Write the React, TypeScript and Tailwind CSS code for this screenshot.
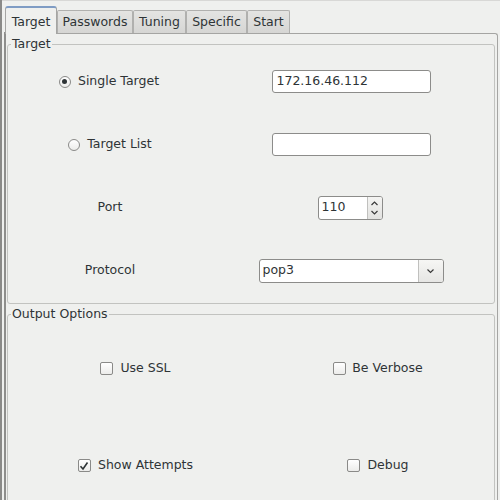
import React from "react";

const font = { fontFamily: '"DejaVu Sans", "Liberation Sans", sans-serif' };

function Radio({ checked }: { checked?: boolean }) {
  return (
    <span className="w-[12px] h-[12px] rounded-full border border-[#8a8a88] bg-gradient-to-b from-[#ffffff] to-[#ececea] flex items-center justify-center shrink-0">
      {checked && <span className="w-[5px] h-[5px] rounded-full bg-[#2e3436]" />}
    </span>
  );
}

function Check({ checked }: { checked?: boolean }) {
  return (
    <span className="w-[13px] h-[13px] rounded-[2px] border border-[#8a8a88] bg-gradient-to-b from-[#ffffff] to-[#ececea] flex items-center justify-center shrink-0">
      {checked && (
        <svg width="10" height="10" viewBox="0 0 10 10">
          <path d="M1.5 5.2 L4 8 L8.5 1.5" fill="none" stroke="#2e3436" strokeWidth="1.6" />
        </svg>
      )}
    </span>
  );
}

function Tab({ label, active, w }: { label: string; active?: boolean; w: string }) {
  if (active) {
    return (
      <div className={`${w} h-[28px] -mb-[1px] relative z-10 bg-[#eff0ee] border border-b-0 border-[#a5a5a3] border-t-[#7f9cc4] border-t-2 rounded-t-[3px] flex items-start justify-center pt-[5px]`}>
        <span className="text-[12.5px] text-[#2e3436]">{label}</span>
      </div>
    );
  }
  return (
    <div className={`${w} h-[23px] bg-gradient-to-b from-[#e4e4e2] to-[#d6d6d4] border border-b-0 border-[#b0b0ae] rounded-t-[2px] flex items-center justify-center`}>
      <span className="text-[12.5px] text-[#2e3436]">{label}</span>
    </div>
  );
}

function Group({ title, children, className }: { title: string; children: React.ReactNode; className?: string }) {
  return (
    <div className={`relative border border-[#c2c3c0] rounded-[3px] ${className ?? ""}`}>
      <span className="absolute -top-[9px] left-[3px] bg-[#eff0ee] px-[1px] text-[12.5px] leading-[16px] text-[#2e3436]">
        {title}
      </span>
      {children}
    </div>
  );
}

export default function App() {
  return (
    <div className="w-[500px] h-[500px] bg-[#eff0ee] overflow-hidden relative text-[#2e3436]" style={font}>
      <div className="h-[1px] bg-[#d8d8d6]" />
      <div className="absolute left-0 top-0 bottom-0 w-[2px] bg-[#8a8a88]" />
      <div className="absolute left-[4px] top-[32px] bottom-0 w-[2px] bg-[#8e8e8c]" />
      <div className="pl-[5px] pt-[4px] flex items-end h-[32px]">
        <Tab label="Target" active w="w-[52px]" />
        <Tab label="Passwords" w="w-[76px]" />
        <Tab label="Tuning" w="w-[53px]" />
        <Tab label="Specific" w="w-[61px]" />
        <Tab label="Start" w="w-[43px]" />
      </div>
      <div className="ml-[4px] w-[494px] h-[470px] border-t border-r border-[#a5a5a3] rounded-tr-[3px] pl-[3px] pr-[2px] pt-[10px]">
        <Group title="Target" className="h-[260px]">
          <div className="grid grid-cols-[200px_1fr] grid-rows-[63px_63px_63px_63px] pt-[5px] pl-[2px]">
            <div className="flex items-center justify-center">
              <div className="flex items-center gap-[7px] -ml-[2px]">
                <Radio checked />
                <span className="text-[12.5px]">Single Target</span>
              </div>
            </div>
            <div className="flex items-center justify-center">
              <div className="w-[159px] h-[23px] -ml-[2px] border border-[#8c8c8a] rounded-[3px] bg-white flex items-center px-[4px] text-[12.5px]">
                172.16.46.112
              </div>
            </div>
            <div className="flex items-center justify-center">
              <div className="flex items-center gap-[7px]">
                <Radio />
                <span className="text-[12.5px]">Target List</span>
              </div>
            </div>
            <div className="flex items-center justify-center">
              <div className="w-[159px] h-[23px] -ml-[2px] border border-[#8c8c8a] rounded-[3px] bg-white" />
            </div>
            <div className="flex items-center justify-center">
              <span className="text-[12.5px]">Port</span>
            </div>
            <div className="flex items-center justify-center">
              <div className="w-[65px] h-[24px] -ml-[4px] border border-[#8c8c8a] rounded-[3px] bg-white flex">
                <div className="flex-1 flex items-center px-[3px] text-[12.5px]">110</div>
                <div className="w-[15px] border-l border-[#c0c0be] bg-gradient-to-b from-[#f4f4f2] to-[#e2e2e0] flex flex-col items-center justify-center rounded-r-[2px]">
                  <svg width="9" height="20" viewBox="0 0 9 20">
                    <path d="M1.5 7 L4.5 4 L7.5 7" fill="none" stroke="#3a3a3a" strokeWidth="1.2" />
                    <path d="M1.5 13 L4.5 16 L7.5 13" fill="none" stroke="#3a3a3a" strokeWidth="1.2" />
                  </svg>
                </div>
              </div>
            </div>
            <div className="flex items-center justify-center">
              <span className="text-[12.5px]">Protocol</span>
            </div>
            <div className="flex items-center justify-center">
              <div className="w-[185px] h-[24px] -ml-[2px] border border-[#8c8c8a] rounded-[3px] bg-white flex">
                <div className="flex-1 flex items-center px-[3px] text-[12.5px]">pop3</div>
                <div className="w-[25px] border-l border-[#c0c0be] bg-gradient-to-b from-[#f6f6f4] to-[#e6e6e4] flex items-center justify-center rounded-r-[2px]">
                  <svg width="9" height="6" viewBox="0 0 9 6">
                    <path d="M1.5 1.5 L4.5 4.5 L7.5 1.5" fill="none" stroke="#3a3a3a" strokeWidth="1.2" />
                  </svg>
                </div>
              </div>
            </div>
          </div>
        </Group>
        <Group title="Output Options" className="mt-[10px] h-[200px]">
          <div className="grid grid-cols-[250px_1fr] grid-rows-[97px_97px] pt-[5px]">
            <div className="flex items-center justify-center">
              <div className="flex items-center gap-[7px] ml-[5px]">
                <Check />
                <span className="text-[12.5px]">Use SSL</span>
              </div>
            </div>
            <div className="flex items-center justify-center">
              <div className="flex items-center gap-[6px] ml-[4px]">
                <Check />
                <span className="text-[12.5px]">Be Verbose</span>
              </div>
            </div>
            <div className="flex items-center justify-center">
              <div className="flex items-center gap-[7px] ml-[5px]">
                <Check checked />
                <span className="text-[12.5px]">Show Attempts</span>
              </div>
            </div>
            <div className="flex items-center justify-center">
              <div className="flex items-center gap-[7px] ml-[4px]">
                <Check />
                <span className="text-[12.5px]">Debug</span>
              </div>
            </div>
          </div>
        </Group>
      </div>
    </div>
  );
}
